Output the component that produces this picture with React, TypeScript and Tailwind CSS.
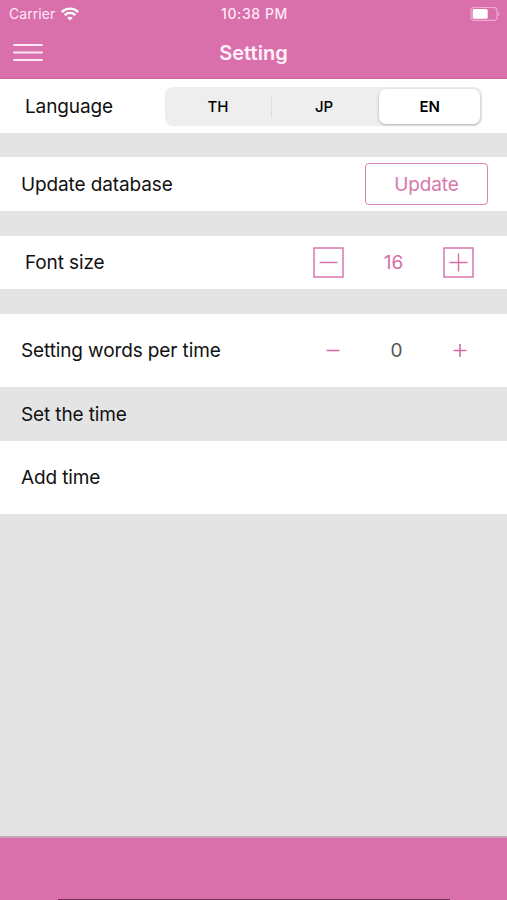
import { useState } from 'react';

const LANGUAGES = ['TH', 'JP', 'EN'] as const;

type Language = (typeof LANGUAGES)[number];

export default function App() {
  const [language, setLanguage] = useState<Language>('EN');
  const [fontSize, setFontSize] = useState(16);
  const [words, setWords] = useState(0);

  return (
    <div className="flex h-[900px] w-[507px] flex-col overflow-hidden bg-[#e4e4e4] font-['Inter',sans-serif] text-[19px] leading-6 tracking-[-0.12px] text-[#111111]">
      <header className="h-[79px] shrink-0 border-b border-[#d268a3] bg-[#d970ab] text-white">
        <StatusBar />
        <div className="grid h-[49px] grid-cols-[1fr_auto_1fr] items-center pl-[13px] pr-[13px]">
          <button type="button" aria-label="Menu">
            <svg
              className="block"
              width="30"
              height="19"
              viewBox="0 0 30 19"
              stroke="#ffe6f5"
              strokeWidth="2"
              strokeLinecap="round"
            >
              <path d="M1 2H29M1 9.5H29M1 17H29" />
            </svg>
          </button>
          <h1 className="text-[20px] font-semibold tracking-[0.05px] text-[#fff0fa]">Setting</h1>
        </div>
      </header>

      <main className="flex flex-1 flex-col">
        <section className="flex h-[54px] items-center justify-between bg-white pl-[25px] pr-[25px]">
          <span className="pt-[2px]">Language</span>
          <LanguageTabs value={language} onChange={setLanguage} />
        </section>

        <section className="mt-6 flex h-[54px] items-center justify-between bg-white pl-[21px] pr-[19px]">
          <span className="pt-[2px]">Update database</span>
          <button
            type="button"
            className="h-[42px] w-[123px] rounded-[4px] border-[1.5px] border-[#d883b1] pt-[2px] text-[#d778ab]"
          >
            Update
          </button>
        </section>

        <section className="mt-[25px] flex h-[53px] items-center justify-between bg-white pl-[25px] pr-[33px]">
          <span>Font size</span>
          <div className="flex items-center text-[#d56da8]">
            <button type="button" aria-label="Smaller" onClick={() => setFontSize(fontSize - 1)}>
              <BoxedSign />
            </button>
            <span className="w-[99px] text-center">{fontSize}</span>
            <button type="button" aria-label="Larger" onClick={() => setFontSize(fontSize + 1)}>
              <BoxedSign plus />
            </button>
          </div>
        </section>

        <section className="mt-[25px] flex h-[73px] items-center justify-between bg-white pl-[21px] pr-[40px]">
          <span>Setting words per time</span>
          <div className="flex items-center text-[#d56da8]">
            <button type="button" aria-label="Fewer words" onClick={() => setWords(Math.max(0, words - 1))}>
              <Sign />
            </button>
            <span className="w-[113px] text-center text-[#555555]">{words}</span>
            <button type="button" aria-label="More words" onClick={() => setWords(words + 1)}>
              <Sign plus />
            </button>
          </div>
        </section>

        <h2 className="flex h-[54px] items-center pl-[21px] pt-[2px]">Set the time</h2>
        <section className="flex h-[73px] items-center bg-white pl-[21px]">Add time</section>
      </main>

      <footer className="flex h-[64px] shrink-0 flex-col items-center justify-end border-t-2 border-[#c4a4b8] bg-[#d970ab]">
        <div className="h-px w-[392px] bg-[#7d2d5c]" />
      </footer>
    </div>
  );
}

function StatusBar() {
  return (
    <div className="grid h-[28px] grid-cols-3 items-center pl-[9px] pr-[7px] text-[14px] leading-4 tracking-[0.05px] text-[#ffe9f7]">
      <div className="flex items-center gap-[6px]">
        <span>Carrier</span>
        <svg width="18" height="14" viewBox="0 0 18 14" fill="none" stroke="#fff" strokeWidth="2.3">
          <path d="M0.8 5.1C5.4 0.5 12.6 0.5 17.2 5.1" />
          <path d="M3.7 8.1C6.7 5.2 11.3 5.2 14.3 8.1" />
          <path d="M9 13.6L6.2 10.8C7.8 9.3 10.2 9.3 11.8 10.8Z" fill="#fff" stroke="none" />
        </svg>
      </div>
      <span className="text-center font-medium tracking-[0.6px]">10:38 PM</span>
      <svg className="justify-self-end" width="30" height="15" viewBox="0 0 30 15" fill="none">
        <rect x="1" y="0.4" width="26" height="13" rx="3.5" stroke="#f0a9d1" strokeWidth="1.2" />
        <rect x="2.7" y="2.1" width="15" height="9.6" rx="1.5" fill="#fff" />
        <path d="M28 4.7C30 5.5 30 8.3 28 9.1Z" fill="#f0a9d1" />
      </svg>
    </div>
  );
}

type LanguageTabsProps = {
  value: Language;
  onChange: (language: Language) => void;
};

function LanguageTabs({ value, onChange }: LanguageTabsProps) {
  return (
    <div className="grid h-[39px] w-[317px] grid-cols-3 items-center rounded-[8px] bg-[#eeeeee] text-[15px] leading-5 tracking-[-0.2px] text-black">
      {LANGUAGES.map((lang, i) => (
        <div
          key={lang}
          className={`flex items-center ${i === 1 ? 'h-[23px] border-l border-[#dddddd]' : 'h-full p-[2px]'}`}
        >
          <button
            type="button"
            onClick={() => onChange(lang)}
            className={`h-full flex-1 rounded-[7px] pt-px ${
              lang === value ? 'ml-px bg-white font-semibold shadow-[0_1px_3px_rgba(0,0,0,0.25)]' : 'font-medium'
            }`}
          >
            {lang}
          </button>
        </div>
      ))}
    </div>
  );
}

function BoxedSign({ plus }: { plus?: boolean }) {
  return (
    <svg className="block" width="31" height="31" viewBox="0 0 31 31" fill="none" stroke="currentColor" strokeWidth="1.4">
      <rect x="1" y="1" width="29" height="29" />
      <path d={plus ? 'M6.5 15.5H24.5M15.5 6.5V24.5' : 'M6.5 15.5H24.5'} />
    </svg>
  );
}

function Sign({ plus }: { plus?: boolean }) {
  return (
    <svg className="block" width="14" height="14" viewBox="0 0 14 14" fill="none" stroke="currentColor" strokeWidth="1.6">
      <path d={plus ? 'M0.5 6.5H13.5M7 0V13' : 'M0.5 6.5H13.5'} />
    </svg>
  );
}
